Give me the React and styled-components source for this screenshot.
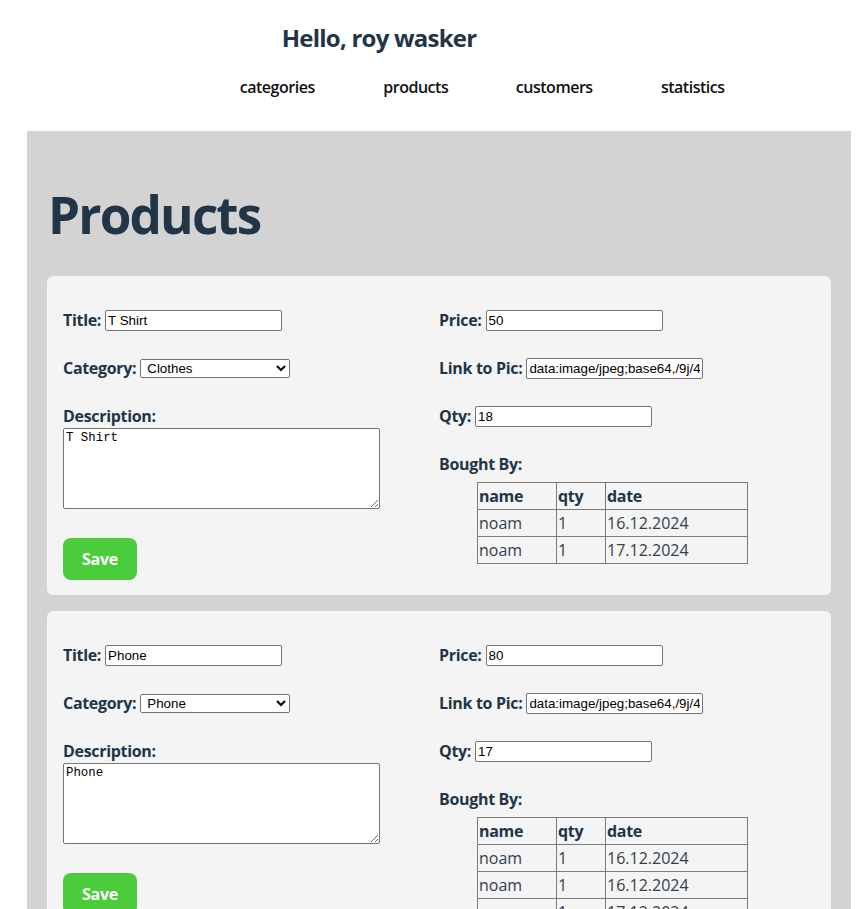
import React from 'react'
import styled, { createGlobalStyle } from 'styled-components'

const GlobalStyle = createGlobalStyle`
  body {
    margin: 0;
    background: #ffffff;
    color: #213547;
    font-family: "Open Sans", "Noto Sans", sans-serif;
    line-height: 1.5;
  }
`

const Header = styled.header`
  height: 131px;
  padding-left: 208px;
  box-sizing: border-box;
`

const Greeting = styled.h2`
  width: 342px;
  margin: 0;
  padding-top: 20px;
  font-size: 24px;
  font-weight: 700;
  line-height: 36px;
  letter-spacing: -0.032em;
  text-align: center;
  color: #213547;
`

const Nav = styled.nav`
  display: flex;
  margin-top: 19px;
`

const NavLink = styled.a`
  width: 138.5px;
  text-align: center;
  font-size: 16px;
  font-weight: 600;
  line-height: 24px;
  letter-spacing: -0.03em;
  color: #111;
  text-decoration: none;
  cursor: pointer;
`

const Main = styled.main`
  margin: 0 16px 0 27px;
  padding: 20px 20px 40px;
  background: #d3d3d3;
  min-height: calc(100vh - 131px);
  box-sizing: border-box;
`

const PageTitle = styled.h1`
  margin: 0 0 34px 1px;
  font-size: 51.2px;
  line-height: 1.1;
  font-weight: 700;
  letter-spacing: -0.036em;
  color: #213547;
  height: 91px;
  display: flex;
  align-items: flex-end;
`

const CardList = styled.div`
  display: flex;
  flex-direction: column;
  gap: 16px;
`

const Card = styled.section`
  display: grid;
  grid-template-columns: 1fr 1fr;
  padding: 32px 16px 15px;
  background: #f4f4f4;
  border-radius: 6px;
`

const Column = styled.div`
  display: flex;
  flex-direction: column;
  align-items: flex-start;
`

const Field = styled.div`
  display: flex;
  align-items: center;
  gap: 4px;
  height: 24px;
  margin-bottom: ${p => (p.$last ? 0 : 24)}px;
`

const Label = styled.label`
  font-size: 16px;
  font-weight: 700;
  line-height: 24px;
  letter-spacing: -0.02em;
  color: #213547;
  white-space: nowrap;
`

const TextInput = styled.input`
  box-sizing: border-box;
  width: 177px;
  height: 21px;
  padding: 1px 2px;
  border: 1px solid #767676;
  border-radius: 2px;
  background: #fff;
  font-family: "Liberation Sans", Arial, sans-serif;
  font-size: 13.33px;
  color: #000;
`

const Select = styled.select`
  box-sizing: border-box;
  width: 150px;
  height: 19px;
  padding: 0 0 0 2px;
  border: 1px solid #767676;
  border-radius: 2px;
  background: #fff;
  font-family: "Liberation Sans", Arial, sans-serif;
  font-size: 13.33px;
  color: #000;
`

const TextArea = styled.textarea`
  display: block;
  box-sizing: border-box;
  width: 317px;
  height: 81px;
  margin: 0;
  padding: 2px;
  border: 1px solid #767676;
  border-radius: 2px;
  background: #fff;
  font-family: "Liberation Mono", monospace;
  font-size: 12.4px;
  line-height: 1.25;
  color: #000;
`

const SaveButton = styled.button`
  margin-top: 29px;
  width: 74px;
  height: 42px;
  border: none;
  border-radius: 8px;
  background: #4bcc3b;
  color: #fff;
  font-family: inherit;
  font-size: 16px;
  font-weight: 700;
  letter-spacing: -0.02em;
  cursor: pointer;
`

const BuyersTable = styled.table`
  margin: 6px 0 0 38px;
  border-collapse: collapse;
  font-size: 16px;
  line-height: 24px;
  color: #213547;
`

const Th = styled.th`
  width: ${p => p.$w}px;
  padding: 1px;
  border: 1px solid #7a7a7a;
  text-align: left;
  font-weight: 700;
  letter-spacing: -0.02em;
  box-sizing: border-box;
`

const Td = styled.td`
  padding: 1px;
  border: 1px solid #7a7a7a;
  font-weight: 400;
  color: #33404d;
`

const LINK = 'data:image/jpeg;base64,/9j/4AAQSkZJRgABAQAAAQABAAD/2wCEAAkGBxMTEhUTExMWFhUXGBgYGBgYGBgaGBgYGBgYGBgYGB0dHSggGBolHRgYITEhJSkrLi4uFx8zODMsNygtLisBCgoKDg0OGhAQGi0lHyUtLS0tLS0tLS0t'

const products = [
  {
    title: 'T Shirt',
    category: 'Clothes',
    description: 'T Shirt',
    price: 50,
    qty: 18,
    buyers: [
      { name: 'noam', qty: 1, date: '16.12.2024' },
      { name: 'noam', qty: 1, date: '17.12.2024' },
    ],
  },
  {
    title: 'Phone',
    category: 'Phone',
    description: 'Phone',
    price: 80,
    qty: 17,
    buyers: [
      { name: 'noam', qty: 1, date: '16.12.2024' },
      { name: 'noam', qty: 1, date: '16.12.2024' },
      { name: 'noam', qty: 1, date: '17.12.2024' },
    ],
  },
]

function ProductCard({ p }) {
  return (
    <Card>
      <Column>
        <Field>
          <Label>Title:</Label>
          <TextInput defaultValue={p.title} />
        </Field>
        <Field>
          <Label>Category:</Label>
          <Select defaultValue={p.category}>
            <option>Clothes</option>
            <option>Phone</option>
          </Select>
        </Field>
        <Field $last>
          <Label>Description:</Label>
        </Field>
        <TextArea defaultValue={p.description} />
        <SaveButton>Save</SaveButton>
      </Column>
      <Column>
        <Field>
          <Label>Price:</Label>
          <TextInput defaultValue={p.price} />
        </Field>
        <Field>
          <Label>Link to Pic:</Label>
          <TextInput defaultValue={LINK} />
        </Field>
        <Field>
          <Label>Qty:</Label>
          <TextInput defaultValue={p.qty} />
        </Field>
        <Field $last>
          <Label>Bought By:</Label>
        </Field>
        <BuyersTable>
          <thead>
            <tr>
              <Th $w={79}>name</Th>
              <Th $w={49}>qty</Th>
              <Th $w={142}>date</Th>
            </tr>
          </thead>
          <tbody>
            {p.buyers.map((b, i) => (
              <tr key={i}>
                <Td>{b.name}</Td>
                <Td>{b.qty}</Td>
                <Td>{b.date}</Td>
              </tr>
            ))}
          </tbody>
        </BuyersTable>
      </Column>
    </Card>
  )
}

export default function App() {
  return (
    <>
      <GlobalStyle />
      <Header>
        <Greeting>Hello, roy wasker</Greeting>
        <Nav>
          <NavLink>categories</NavLink>
          <NavLink>products</NavLink>
          <NavLink>customers</NavLink>
          <NavLink>statistics</NavLink>
        </Nav>
      </Header>
      <Main>
        <PageTitle>Products</PageTitle>
        <CardList>
          {products.map((p, i) => (
            <ProductCard key={i} p={p} />
          ))}
        </CardList>
      </Main>
    </>
  )
}
